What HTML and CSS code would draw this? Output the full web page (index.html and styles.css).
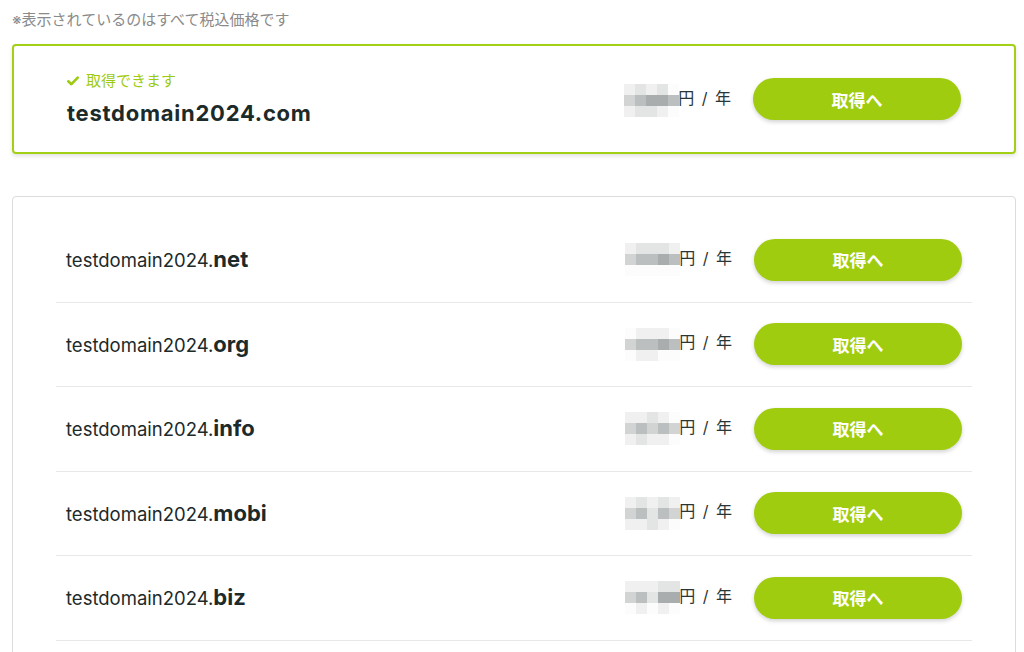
FILE: index.html
```html
<!DOCTYPE html>
<html lang="ja">
<head>
<meta charset="utf-8">
<link rel="stylesheet" href="styles.css">
</head>
<body>
<div class="page">
  <p class="note">※表示されているのはすべて税込価格です</p>

  <div class="hero">
    <div class="hero-info">
      <div class="status">
        <svg class="check" viewBox="0 0 12 10" width="12" height="10"><path d="M1.3 5.3 L4.4 8.2 L10.7 1.7" fill="none" stroke="#9dcb0f" stroke-width="2.6" stroke-linecap="round" stroke-linejoin="round"/></svg>
        <span>取得できます</span>
      </div>
      <div class="hero-domain">testdomain2024.com</div>
    </div>
    <div class="price">
      <div class="mosaic">
        <i class="c1"></i><i class="c2"></i><i class="c1"></i><i class="c2"></i><i class="c0"></i>
        <i class="c3"></i><i class="c4"></i><i class="c5"></i><i class="c5"></i><i class="c4"></i>
        <i class="c1"></i><i class="c2"></i><i class="c2"></i><i class="c1"></i><i class="c0"></i>
      </div>
      <span class="unit">円 / 年</span>
    </div>
    <button class="btn">取得へ</button>
  </div>

  <div class="list">
    <div class="row">
      <div class="domain">testdomain2024.<b>net</b></div>
      <div class="price">
        <div class="mosaic">
          <i class="c1"></i><i class="c2"></i><i class="c2"></i><i class="c2"></i><i class="c1"></i>
          <i class="c3"></i><i class="c4"></i><i class="c4"></i><i class="c5"></i><i class="c4"></i>
          <i class="c0"></i><i class="c0"></i><i class="c0"></i><i class="c0"></i><i class="c0"></i>
        </div>
        <span class="unit">円 / 年</span>
      </div>
      <button class="btn">取得へ</button>
    </div>
    <div class="row">
      <div class="domain">testdomain2024.<b>org</b></div>
      <div class="price">
        <div class="mosaic">
          <i class="c0"></i><i class="c1"></i><i class="c1"></i><i class="c1"></i><i class="c0"></i>
          <i class="c3"></i><i class="c4"></i><i class="c4"></i><i class="c5"></i><i class="c4"></i>
          <i class="c0"></i><i class="c1"></i><i class="c1"></i><i class="c0"></i><i class="c0"></i>
        </div>
        <span class="unit">円 / 年</span>
      </div>
      <button class="btn">取得へ</button>
    </div>
    <div class="row">
      <div class="domain">testdomain2024.<b>info</b></div>
      <div class="price">
        <div class="mosaic">
          <i class="c1"></i><i class="c1"></i><i class="c2"></i><i class="c1"></i><i class="c0"></i>
          <i class="c3"></i><i class="c4"></i><i class="c3"></i><i class="c4"></i><i class="c3"></i>
          <i class="c1"></i><i class="c2"></i><i class="c1"></i><i class="c1"></i><i class="c0"></i>
        </div>
        <span class="unit">円 / 年</span>
      </div>
      <button class="btn">取得へ</button>
    </div>
    <div class="row">
      <div class="domain">testdomain2024.<b>mobi</b></div>
      <div class="price">
        <div class="mosaic">
          <i class="c1"></i><i class="c2"></i><i class="c1"></i><i class="c2"></i><i class="c1"></i>
          <i class="c3"></i><i class="c4"></i><i class="c2"></i><i class="c4"></i><i class="c3"></i>
          <i class="c1"></i><i class="c1"></i><i class="c2"></i><i class="c1"></i><i class="c0"></i>
        </div>
        <span class="unit">円 / 年</span>
      </div>
      <button class="btn">取得へ</button>
    </div>
    <div class="row">
      <div class="domain">testdomain2024.<b>biz</b></div>
      <div class="price">
        <div class="mosaic">
          <i class="c1"></i><i class="c1"></i><i class="c1"></i><i class="c2"></i><i class="c2"></i>
          <i class="c3"></i><i class="c4"></i><i class="c2"></i><i class="c5"></i><i class="c5"></i>
          <i class="c0"></i><i class="c1"></i><i class="c0"></i><i class="c1"></i><i class="c0"></i>
        </div>
        <span class="unit">円 / 年</span>
      </div>
      <button class="btn">取得へ</button>
    </div>
  </div>
</div>
</body>
</html>
```

FILE: styles.css
```css
* { box-sizing: border-box; }
html, body { margin: 0; padding: 0; background: #fff; }
body {
  font-family: "Inter", "Noto Sans CJK JP", "Noto Sans", sans-serif;
  color: #1c2a2a;
  overflow: hidden;
  height: 652px;
}
.page { padding: 0 8px 0 12px; }
.note {
  margin: 0;
  padding-top: 11px;
  height: 44px;
  font-size: 15px;
  color: #8a8a8a;
  line-height: 18px;
}
.hero {
  height: 110px;
  border: 2px solid #a3cf14;
  border-radius: 4px;
  box-shadow: 0 2px 4px rgba(0,0,0,0.12);
  display: flex;
  align-items: center;
  padding: 0 53px 0 53px;
}
.hero-info { flex: 1; }
.status {
  display: flex;
  align-items: center;
  gap: 7px;
  color: #9dcb0f;
  font-size: 15px;
  line-height: 18px;
}
.check { display: block; }
.hero-domain {
  font-size: 22px;
  font-weight: 700;
  line-height: 28px;
  margin-top: 9px;
  letter-spacing: 0.75px;
}
.price {
  display: flex;
  align-items: center;
  margin-right: 22px;
}
.hero .price { margin-top: 2px; }
.mosaic {
  display: grid;
  grid-template-columns: repeat(5, 11px);
  grid-template-rows: repeat(3, 11px);
  width: 55px;
}
.mosaic i { display: block; }
.c0 { background: #fcfcfc; }
.c1 { background: #f0f0f0; }
.c2 { background: #e3e4e4; }
.c3 { background: #d2d4d4; }
.c4 { background: #bcbfbf; }
.c5 { background: #a9adad; }
.unit {
  font-size: 16px;
  line-height: 20px;
  padding-bottom: 4px;
  color: #2a3535;
  letter-spacing: 1.5px;
  margin-left: -1px;
  margin-right: -1.5px;
  white-space: nowrap;
}
.btn {
  width: 208px;
  height: 42px;
  border: none;
  border-radius: 21px;
  background: #9fcc0f;
  color: #fff;
  font-family: inherit;
  font-size: 17px;
  font-weight: 700;
  box-shadow: 0 2px 4px rgba(0,0,0,0.18);
  padding: 0;
}
.list {
  margin-top: 42px;
  border: 1px solid #dcdcdc;
  border-radius: 4px;
  padding: 21px 43px 0 43px;
  height: 600px;
}
.row {
  display: flex;
  align-items: center;
  height: 84.5px;
  border-bottom: 1px solid #e8e8e8;
  padding: 0 10px;
}
.domain {
  flex: 1;
  font-size: 18.5px;
  line-height: 26px;
}
.domain b { font-size: 22px; font-weight: 700; }
.row .price { margin-right: 22px; }
```
